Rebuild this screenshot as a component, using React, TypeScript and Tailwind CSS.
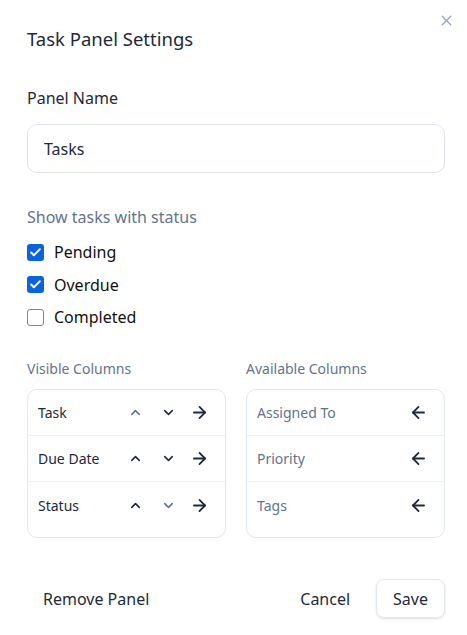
import React, { useState } from 'react';
import { X, ChevronUp, ChevronDown, ArrowRight, ArrowLeft, Check } from 'lucide-react';

const FONT = { fontFamily: '"Noto Sans", "Open Sans", sans-serif' };

type StatusKey = 'pending' | 'overdue' | 'completed';

const STATUS_OPTIONS: { key: StatusKey; label: string }[] = [
  { key: 'pending', label: 'Pending' },
  { key: 'overdue', label: 'Overdue' },
  { key: 'completed', label: 'Completed' },
];

function StatusCheckbox({
  label,
  checked,
  onToggle,
}: {
  label: string;
  checked: boolean;
  onToggle: () => void;
}) {
  return (
    <label className="flex items-center h-6 gap-[10px] cursor-pointer" onClick={onToggle}>
      {checked ? (
        <span className="w-[17px] h-[17px] rounded-[3px] bg-[#0b62e1] flex items-center justify-center">
          <Check className="w-[13px] h-[13px] text-white" strokeWidth={3.5} />
        </span>
      ) : (
        <span className="w-[17px] h-[17px] rounded-[3px] border border-[#858585] bg-white" />
      )}
      <span className="text-[16px] text-[#111111]">{label}</span>
    </label>
  );
}

export default function App() {
  const [panelName, setPanelName] = useState('Tasks');
  const [statuses, setStatuses] = useState<Record<StatusKey, boolean>>({
    pending: true,
    overdue: true,
    completed: false,
  });
  const [visible] = useState(['Task', 'Due Date', 'Status']);
  const [available] = useState(['Assigned To', 'Priority', 'Tags']);

  return (
    <div className="relative w-[467px] h-[635px] bg-white pl-[27px] pr-[22px]" style={FONT}>
      {/* Close */}
      <button className="absolute top-[12px] right-[12px] text-[#94a3b8]">
        <X className="w-[17px] h-[17px]" strokeWidth={1.75} />
      </button>

      <h2 className="pt-[25px] text-[18.5px] leading-[28px] text-[#1e293b]">Task Panel Settings</h2>

      {/* Panel name */}
      <div className="mt-[33px]">
        <label className="block text-[16px] leading-6 text-[#1e293b]">Panel Name</label>
        <input
          value={panelName}
          onChange={(e) => setPanelName(e.target.value)}
          className="mt-[14px] w-full h-[49px] px-4 rounded-[10px] border border-[#dfe4ee] text-[16px] text-[#1e293b] outline-none"
        />
      </div>

      {/* Status filters */}
      <div className="mt-[32px]">
        <p className="text-[16px] leading-6 text-[#64748b]">Show tasks with status</p>
        <div className="mt-[11px] flex flex-col gap-[8.5px]">
          {STATUS_OPTIONS.map((opt) => (
            <StatusCheckbox
              key={opt.key}
              label={opt.label}
              checked={statuses[opt.key]}
              onToggle={() => setStatuses((s) => ({ ...s, [opt.key]: !s[opt.key] }))}
            />
          ))}
        </div>
      </div>

      {/* Columns */}
      <div className="mt-[30px] grid grid-cols-2 gap-5">
        <div>
          <p className="text-[14px] leading-5 text-[#64748b]">Visible Columns</p>
          <div className="mt-[10px] h-[149px] rounded-[10px] border border-[#e2e8f0]">
            {visible.map((col, i) => (
              <div
                key={col}
                className={`flex items-center h-[46px] pl-[10px] pr-[16px] ${i < visible.length - 1 ? 'border-b border-[#eef1f5]' : ''}`}
              >
                <span className="flex-1 text-[14px] text-[#1e293b]">{col}</span>
                <ChevronUp
                  className={`w-[15px] h-[15px] ${i === 0 ? 'text-[#64748b]' : 'text-[#1e293b]'}`}
                  strokeWidth={2.5}
                />
                <ChevronDown
                  className={`ml-[18px] w-[15px] h-[15px] ${i === visible.length - 1 ? 'text-[#64748b]' : 'text-[#1e293b]'}`}
                  strokeWidth={2.5}
                />
                <ArrowRight className="ml-[14px] w-[19px] h-[19px] text-[#1e293b]" strokeWidth={2.25} />
              </div>
            ))}
          </div>
        </div>
        <div>
          <p className="text-[14px] leading-5 text-[#64748b]">Available Columns</p>
          <div className="mt-[10px] h-[149px] rounded-[10px] border border-[#e2e8f0]">
            {available.map((col, i) => (
              <div
                key={col}
                className={`flex items-center h-[46px] pl-[10px] pr-[16px] ${i < available.length - 1 ? 'border-b border-[#eef1f5]' : ''}`}
              >
                <span className="flex-1 text-[14px] text-[#64748b]">{col}</span>
                <ArrowLeft className="w-[19px] h-[19px] text-[#1e293b]" strokeWidth={2.25} />
              </div>
            ))}
          </div>
        </div>
      </div>

      {/* Footer */}
      <div className="mt-[41px] flex items-center">
        <button className="px-4 h-[39px] text-[16px] text-[#1e293b]">Remove Panel</button>
        <div className="ml-auto flex items-center gap-[10px]">
          <button className="px-4 h-[39px] text-[16px] text-[#1e293b]">Cancel</button>
          <button className="px-4 h-[39px] rounded-[8px] border border-[#e2e8f0] shadow-sm text-[16px] text-[#1e293b]">
            Save
          </button>
        </div>
      </div>
    </div>
  );
}
